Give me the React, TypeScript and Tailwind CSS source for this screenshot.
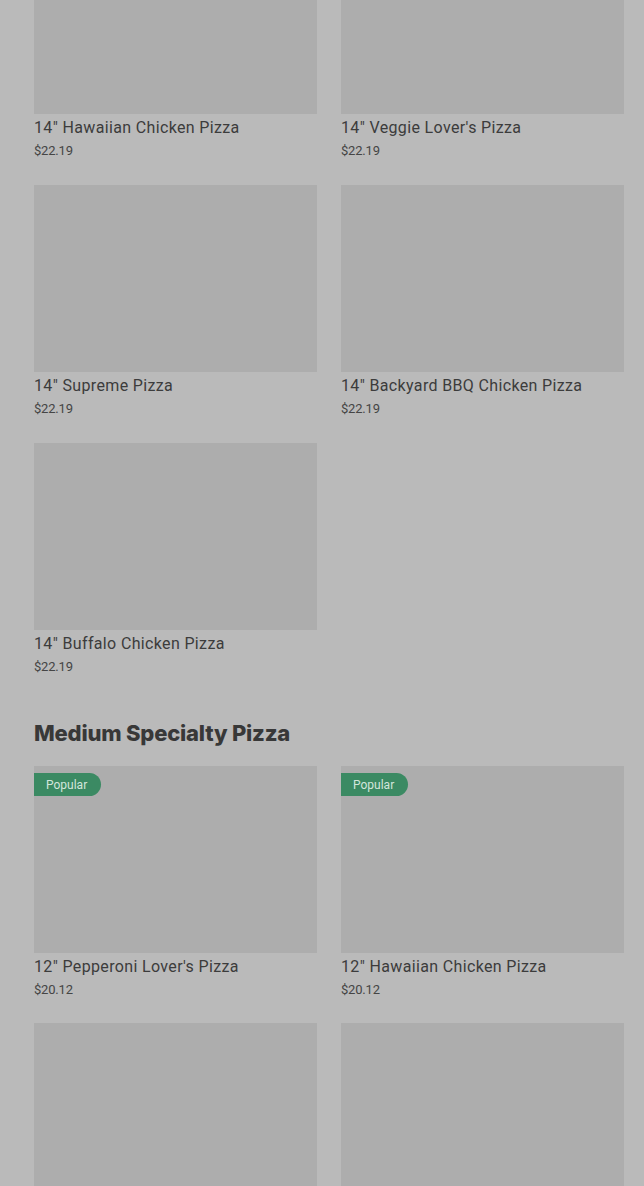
import React from "react";

type Item = { name: string; price: string; popular?: boolean };

const large: Item[] = [
  { name: "14\" Hawaiian Chicken Pizza", price: "$22.19" },
  { name: "14\" Veggie Lover's Pizza", price: "$22.19" },
  { name: "14\" Supreme Pizza", price: "$22.19" },
  { name: "14\" Backyard BBQ Chicken Pizza", price: "$22.19" },
  { name: "14\" Buffalo Chicken Pizza", price: "$22.19" },
];

const medium: Item[] = [
  { name: "12\" Pepperoni Lover's Pizza", price: "$20.12", popular: true },
  { name: "12\" Hawaiian Chicken Pizza", price: "$20.12", popular: true },
  { name: "12\" Supreme Pizza", price: "$20.12" },
  { name: "12\" Veggie Lover's Pizza", price: "$20.12" },
];

function Card({ item }: { item: Item }) {
  return (
    <div className="flex flex-col">
      <div className="relative h-[187px] bg-[#adadad]">
        {item.popular && (
          <span className="absolute left-0 top-[7px] h-[23px] pl-3 pr-[14px] flex items-center rounded-r-full bg-[#3b8a63] text-[12px] text-[#d3e6dc] font-[Roboto,sans-serif]">
            Popular
          </span>
        )}
      </div>
      <p className="mt-[3px] text-[16px] leading-[22px] tracking-[0.35px] text-[#3c3c3c] font-[Roboto,sans-serif]">
        {item.name}
      </p>
      <p className="mt-[3px] text-[13px] leading-[18px] text-[#454545] tracking-[-0.2px] font-[Roboto,sans-serif]">
        {item.price}
      </p>
    </div>
  );
}

export default function App() {
  return (
    <div className="h-[1186px] bg-[#bababa] overflow-hidden">
      <div className="-mt-[73px] pl-[34px] pr-[20px] pb-10">
        <div className="grid grid-cols-2 gap-x-6 gap-y-[25px]">
          {large.map((item, i) => (
            <Card key={i} item={item} />
          ))}
        </div>
        <h2 className="mt-[41px] mb-[17px] text-[22px] leading-[32px] font-extrabold tracking-[-0.2px] text-[#383838] font-[Inter,sans-serif]">
          Medium Specialty Pizza
        </h2>
        <div className="grid grid-cols-2 gap-x-6 gap-y-[24px]">
          {medium.map((item, i) => (
            <Card key={i} item={item} />
          ))}
        </div>
      </div>
    </div>
  );
}
